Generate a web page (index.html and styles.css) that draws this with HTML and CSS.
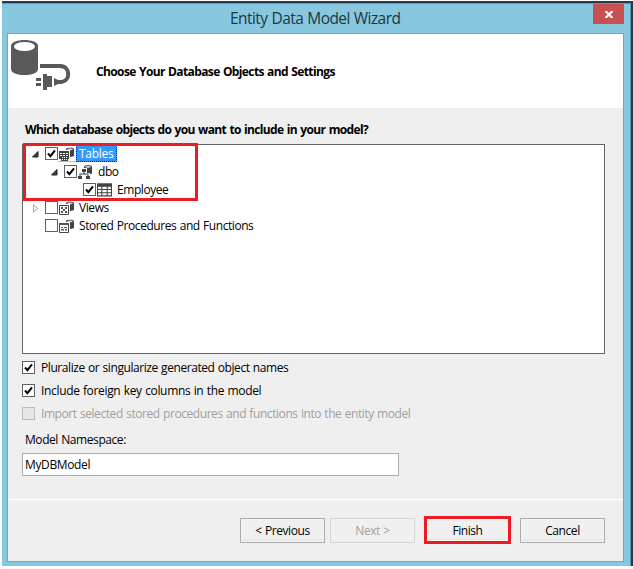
FILE: index.html
```html
<!DOCTYPE html>
<html lang="en">
<head>
<meta charset="utf-8">
<title>Entity Data Model Wizard</title>
<link rel="stylesheet" href="styles.css">
</head>
<body>
<svg class="defs" width="0" height="0" aria-hidden="true">
  <symbol id="check" viewBox="0 0 13 13"><path d="M3 6.500 5.400 9.200 10 3.400" fill="none" stroke="#000" stroke-width="2"/></symbol>
  <symbol id="open" viewBox="0 0 7 7"><path d="M6 .5V6H.5z" fill="#404040" stroke="#202020"/></symbol>
  <symbol id="closed" viewBox="0 0 7 9"><path d="M1.500 .8 5.500 4.500 1.500 8.200z" fill="#fff" stroke="#a0a0a0"/></symbol>
  <symbol id="cylinder" viewBox="0 0 9 11"><path d="M0 1.800C0-.4 9-.4 9 1.800V9C9 11.200 0 11.200 0 9z" fill="#424242"/><ellipse cx="4.500" cy="2" rx="3.200" ry=".9" fill="#ddd"/></symbol>
  <symbol id="tables" viewBox="0 0 15 14"><use href="#cylinder" x="7" width="8" height="11"/><path d="M0 3h11v11H0z" fill="#fff"/><path d="M0 4h10v8H9v2H2v-2H0z" fill="#424242"/><path d="M1 6h2v1H1zM4 6h2v1H4zM7 6h2v1H7zM1 8h2v1H1zM4 8h2v1H4zM7 8h2v1H7zM3 10h1v1H3zM5 10h1v1H5zM7 10h1v1H7zM3 12h1v1H3zM5 12h1v1H5zM7 12h1v1H7z" fill="#fff"/></symbol>
  <symbol id="schema" viewBox="0 0 15 14"><use href="#cylinder" x="6" width="8" height="10"/><path d="M3 3h6v5h3v6H0V8h3z" fill="#fff"/><path d="M4 4h4v3H4zM5.500 7h1v2h-1zM1.500 8.500h9v1h-9zM1.500 9h1v2h-1zM9.500 9h1v2h-1zM0 11h4v3H0zM8 11h4v3H8z" fill="#424242"/></symbol>
  <symbol id="table" viewBox="0 0 14 12"><path d="M.5.5h13v11H.5zM.5 5.500h13M.5 8.500h13M4.500 1v10.500M9.500 1v10.500" fill="#fff" stroke="#424242"/><path d="M0 0h14v3H0z" fill="#424242"/></symbol>
  <symbol id="views" viewBox="0 0 15 14"><use href="#cylinder" x="7" width="8" height="11"/><path d="M0 3h11v11H0z" fill="#fff"/><path d="M.5 4.500h9v9h-9z" fill="#fff" stroke="#424242"/><path d="M2 6h2v2H2zM6 6h2v2H6zM2 10h2v2H2zM6 10h2v2H6zM4 8h2v2H4z" fill="#555"/></symbol>
  <symbol id="procs" viewBox="0 0 15 14"><use href="#cylinder" x="7" width="8" height="11"/><path d="M0 3h11v11H0z" fill="#fff"/><path d="M.5 4.500h9v9h-9z" fill="#fff" stroke="#424242"/><path d="M0 4h10v2H0zM2 8h2v1H2zM5 8h3v1H5zM2 10h3v1.500H2zM6 10h2v1.500H6z" fill="#555"/></symbol>
</svg>
<div class="window">
  <header class="titlebar">
    <h1 class="title">Entity Data Model Wizard</h1>
    <button class="close" aria-label="Close"><svg width="8" height="7" viewBox="0 0 8 7"><path d="M0 0h2l2 2 2-2h2v1L5.500 3.500 8 6v1H6L4 5 2 7H0V6l2.500-2.500L0 1z" fill="#fff"/></svg></button>
  </header>
  <main class="client">
    <section class="banner">
      <svg class="logo" width="60" height="52" viewBox="0 0 60 52">
        <path d="M0 6C0-2 27-2 27 6V29C27 37 0 37 0 29z" fill="#58595b"/>
        <ellipse cx="13.500" cy="6.500" rx="10.500" ry="4.500" fill="#fff"/>
        <path d="M29 26H49C60 26 60 42 49 42H46" fill="none" stroke="#58595b" stroke-width="4"/>
        <path d="M32 34h4v2h5v11h-5v3h-4zM25 38h5v3h-5zM25 43h5v3h-5zM43 38l4 2h3v4h-3l-4 2z" fill="#58595b"/>
      </svg>
      <h2 class="heading">Choose Your Database Objects and Settings</h2>
    </section>
    <section class="content">
      <h3 class="question">Which database objects do you want to include in your model?</h3>
      <div class="tree">
        <div class="row"><svg class="arrow"><use href="#open"/></svg><span class="box"><svg><use href="#check"/></svg></span><span class="kind hot"><svg><use href="#tables"/></svg></span><span class="label selected">Tables</span></div>
        <div class="row level1"><svg class="arrow"><use href="#open"/></svg><span class="box"><svg><use href="#check"/></svg></span><span class="kind"><svg><use href="#schema"/></svg></span><span class="label">dbo</span></div>
        <div class="row level2"><span class="arrow"></span><span class="box"><svg><use href="#check"/></svg></span><span class="kind"><svg><use href="#table"/></svg></span><span class="label">Employee</span></div>
        <div class="row"><svg class="arrow shut"><use href="#closed"/></svg><span class="box"></span><span class="kind"><svg><use href="#views"/></svg></span><span class="label">Views</span></div>
        <div class="row"><span class="arrow"></span><span class="box"></span><span class="kind"><svg><use href="#procs"/></svg></span><span class="label">Stored Procedures and Functions</span></div>
        <div class="tree-highlight"></div>
      </div>
      <div class="options">
        <div class="option"><span class="box"><svg><use href="#check"/></svg></span><span>Pluralize or singularize generated object names</span></div>
        <div class="option"><span class="box"><svg><use href="#check"/></svg></span><span class="opt2">Include foreign key columns in the model</span></div>
        <div class="option disabled"><span class="box"></span><span>Import selected stored procedures and functions into the entity model</span></div>
      </div>
      <div class="ns-label">Model Namespace:</div>
      <div class="ns-input">MyDBModel</div>
    </section>
    <footer class="footer">
      <button class="btn prev">&lt; Previous</button>
      <button class="btn next" disabled>Next &gt;</button>
      <button class="btn finish">Finish</button>
      <button class="btn">Cancel</button>
    </footer>
  </main>
</div>
</body>
</html>
```
FILE: styles.css
```css
* { box-sizing: border-box; }
body { margin: 0; background: #fff; color: #000; font: 12px/16px "Open Sans", "Noto Sans", sans-serif; letter-spacing: -0.43px; word-spacing: 0.6px; }
h1, h2, h3 { margin: 0; }
svg { display: block; }
.defs { position: absolute; }
.window { width: 631px; height: 565px; margin: 1px 0 0 2px; padding: 0 7px 4px 5px; background: #87c8e0; border-top: 2px solid #26394f; border-right: 2px solid #26394f; box-shadow: inset -1px 1px #5b9cb4; }
.titlebar { height: 30px; display: flex; justify-content: flex-end; align-items: flex-start; }
.title { flex: 1; padding-left: 223px; font-size: 15.5px; line-height: 20px; margin-top: 5px; font-weight: 400; color: #24363d; letter-spacing: -0.57px; word-spacing: 0.6px; }
.close { width: 31px; height: 20px; margin-top: 1px; padding: 0; border: 0; background: #c75050; display: flex; align-items: center; justify-content: center; }
.client { width: 617px; height: 529px; border: 1px solid #6fa7bc; background: #efefef; display: flex; flex-direction: column; }
.banner { height: 74px; padding: 6px 0 0 3px; background: #fff; display: flex; }
.heading { margin: 24px 0 0 25px; font-size: 12px; line-height: 16px; letter-spacing: -0.62px; word-spacing: 0.8px; white-space: nowrap; }
.content { height: 392px; padding: 14px 18px 0 14px; border-bottom: 1px solid #fff; }
.question { padding-left: 3px; font-size: 12px; line-height: 16px; letter-spacing: -0.64px; word-spacing: 0.8px; }
.tree { position: relative; width: 583px; height: 210px; margin-top: 6px; background: #fff; border: 1px solid #646464; }
.row { height: 18px; display: flex; align-items: center; padding-left: 10px; position: relative; top: -1px; }
.level1 { padding-left: 29px; }
.level2 { padding-left: 48px; }
.arrow { width: 7px; height: 7px; margin: 3px 5px 0 -1px; }
.arrow.shut { height: 9px; }
.row .arrow + .box { margin-left: 1px; }
.box { width: 13px; height: 13px; flex: none; border: 1px solid #606060; background: #fff; }
.box svg { width: 13px; height: 13px; margin: -1px; }
.kind { width: 18px; height: 17px; padding: 2px 0 0 1px; }
.kind svg { width: 15px; height: 14px; }
.hot { border-top: 1px solid #8bd0ea; border-bottom: 1px solid #8bd0ea; padding-top: 1px; }
.label { height: 17px; line-height: 15px; padding: 0 2px; border: 1px dotted transparent; white-space: nowrap; }
.selected { background: #3399ff; border-color: #10243c; color: #fff; width: 41px; letter-spacing: -0.3px; }
.tree-highlight { position: absolute; left: 0; top: -2px; width: 175px; height: 58px; border: 3px solid #ed1c24; }
.options { margin-top: 2px; }
.option { height: 23px; display: flex; align-items: center; gap: 6px; white-space: nowrap; line-height: 16px; }
.opt2 { letter-spacing: -0.34px; }
.disabled { color: #a0a0a0; }
.disabled .box { border-color: #bcbcbc; background: #e6e6e6; }
.ns-label { margin: 7px 0 0 3px; line-height: 16px; }
.ns-input { width: 377px; height: 23px; margin-top: 5px; padding: 0 2px; border: 1px solid #abadb3; background: #fff; line-height: 21px; letter-spacing: -0.36px; }
.footer { display: flex; justify-content: flex-end; padding: 18px 18px 0 0; }
.btn { width: 85px; height: 25px; padding: 0; margin-left: 5px; border: 1px solid #acacac; background: #f0f0f0; box-shadow: inset 0 0 0 1px #f4f4f4, inset 0 -3px #e9e9e9; font: inherit; letter-spacing: inherit; word-spacing: inherit; color: #000; }
.next { border-color: #d4d4d4; color: #a0a0a0; box-shadow: none; }
.finish { width: 87px; height: 28px; margin: -2px 4px 0 9px; padding-top: 1px; border: 3px solid #ed1c24; }
```
